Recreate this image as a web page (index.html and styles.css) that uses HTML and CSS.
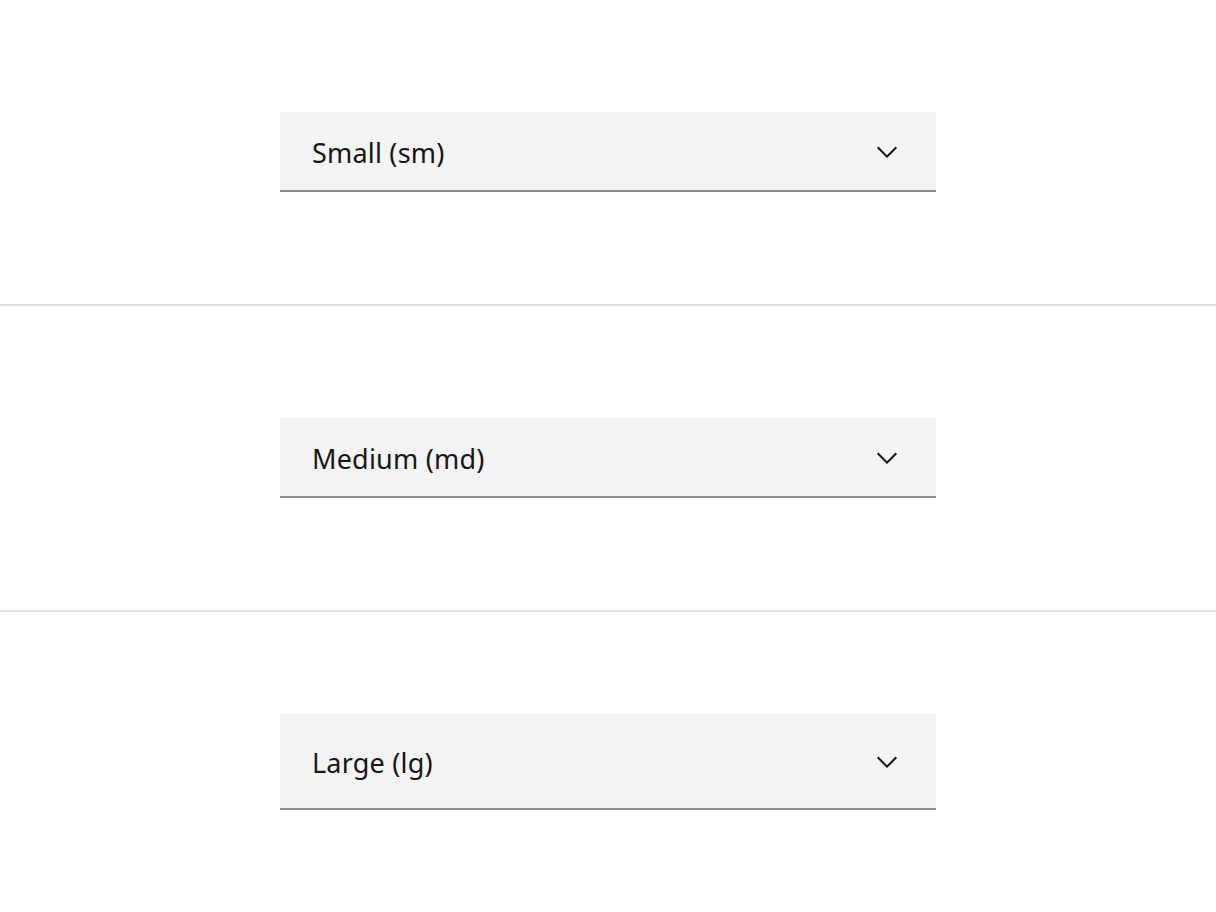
FILE: index.html
```html
<!DOCTYPE html>
<html lang="en">
<head>
  <meta charset="UTF-8">
  <meta name="viewport" content="width=device-width, initial-scale=1.0">
  <title>Dropdown sizes</title>
  <link rel="stylesheet" href="styles.css">
</head>
<body>
  <div class="story">
    <div class="dropdown dropdown-sm">
      <span class="dropdown-label">Small (sm)</span>
      <svg class="chevron" viewBox="0 0 16 16" width="32" height="32" aria-hidden="true">
        <path d="M8 11L3 6 3.7 5.3 8 9.6 12.3 5.3 13 6z"></path>
      </svg>
    </div>
  </div>

  <div class="story">
    <div class="dropdown dropdown-md">
      <span class="dropdown-label">Medium (md)</span>
      <svg class="chevron" viewBox="0 0 16 16" width="32" height="32" aria-hidden="true">
        <path d="M8 11L3 6 3.7 5.3 8 9.6 12.3 5.3 13 6z"></path>
      </svg>
    </div>
  </div>

  <div class="story story-last">
    <div class="dropdown dropdown-lg">
      <span class="dropdown-label">Large (lg)</span>
      <svg class="chevron" viewBox="0 0 16 16" width="32" height="32" aria-hidden="true">
        <path d="M8 11L3 6 3.7 5.3 8 9.6 12.3 5.3 13 6z"></path>
      </svg>
    </div>
  </div>
</body>
</html>
```

FILE: styles.css
```css
html, body {
  height: 100%;
}
body {
  margin: 0;
  background-color: #fff;
  font-family: 'Noto Sans', 'Open Sans', sans-serif;
  color: #161616;
  display: flex;
  flex-direction: column;
  overflow: hidden;
}
.story {
  height: 304px;
  flex-shrink: 0;
  display: flex;
  justify-content: center;
  align-items: center;
  border-bottom: 2px solid #e0e0e0;
}
.story-last {
  flex: 1;
  height: auto;
  border-bottom: none;
}
.dropdown {
  width: 656px;
  box-sizing: border-box;
  display: flex;
  align-items: center;
  justify-content: space-between;
  padding: 0 33px 0 32px;
  background-color: #f4f4f4;
  border-bottom: 2px solid #8d8d8d;
}
.dropdown-sm,
.dropdown-md {
  height: 80px;
}
.dropdown-lg {
  height: 96px;
}
.dropdown-label {
  font-size: 27px;
  letter-spacing: 0.2px;
  line-height: 36px;
  padding-top: 3px;
}
.chevron {
  fill: #161616;
  flex-shrink: 0;
  margin-top: 2px;
}
```
